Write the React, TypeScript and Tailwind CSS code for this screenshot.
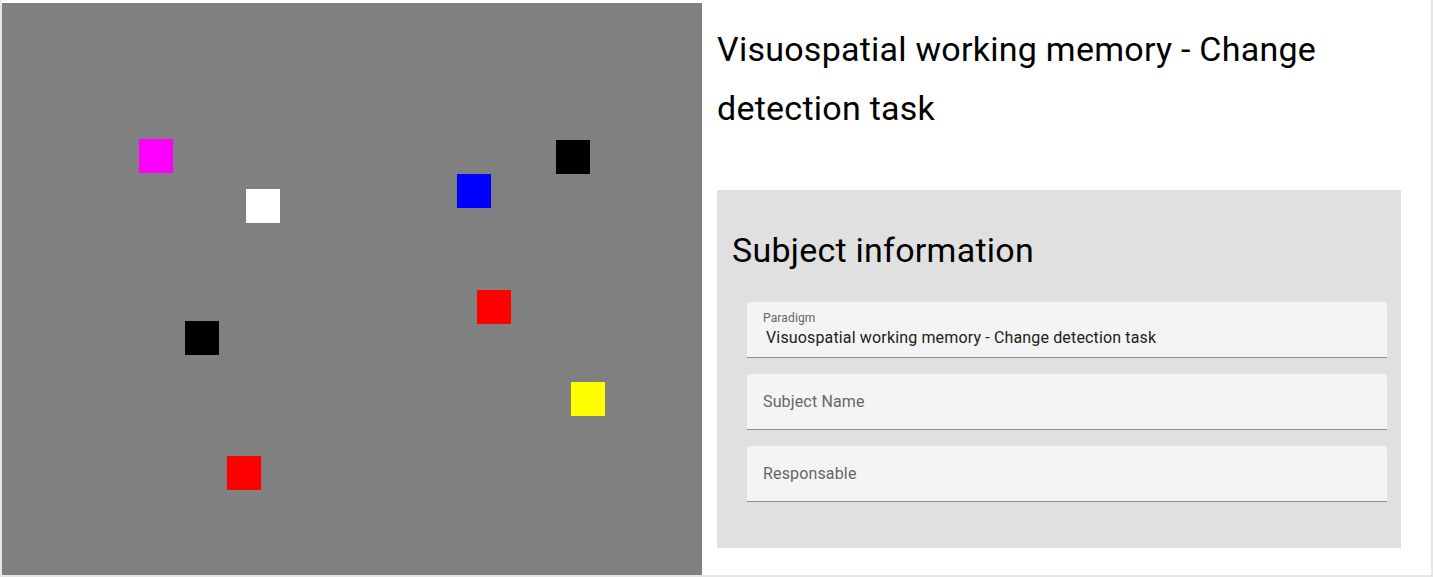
const squares = [
  { x: 137, y: 136, color: "bg-[#ff00ff]" },
  { x: 244, y: 186, color: "bg-white" },
  { x: 455, y: 171, color: "bg-[#0000ff]" },
  { x: 554, y: 137, color: "bg-black" },
  { x: 475, y: 287, color: "bg-[#ff0000]" },
  { x: 183, y: 318, color: "bg-black" },
  { x: 569, y: 379, color: "bg-[#ffff00]" },
  { x: 225, y: 453, color: "bg-[#ff0000]" },
];

function Field({ label, value }: { label: string; value?: string }) {
  return (
    <div className="h-[56px] w-[640px] rounded-t-[4px] border-b border-[#8d8d8d] bg-[#f4f4f4] px-4 tracking-[0.15px]">
      {value ? (
        <div className="flex flex-col pt-[8px]">
          <span className="text-[12px] leading-[16px] text-[#666666]">{label}</span>
          <span className="pl-[3px] text-[16px] leading-[24px] text-[#212121]">{value}</span>
        </div>
      ) : (
        <div className="flex h-full items-center text-[16px] text-[#666666]">{label}</div>
      )}
    </div>
  );
}

export default function App() {
  return (
    <div
      className="flex h-[577px] w-[1433px] border-x-2 border-b-2 border-[#e6e6e6] bg-white pt-[1px]"
      style={{ fontFamily: "Roboto, 'Liberation Sans', sans-serif" }}
    >
      {/* stimulus canvas */}
      <div className="relative h-[572px] w-[700px] mt-[2px] shrink-0 bg-[#808080]">
        {squares.map((s, i) => (
          <div
            key={i}
            className={`absolute h-[34px] w-[34px] ${s.color}`}
            style={{ left: s.x, top: s.y }}
          />
        ))}
      </div>

      <div className="flex flex-col pl-[15px] pt-[19px]">
        <h1 className="w-[684px] text-[34px] leading-[59px] tracking-[0.25px] text-black">
          Visuospatial working memory - Change detection task
        </h1>

        <div className="mt-[52px] flex h-[358px] w-[684px] flex-col bg-[#e0e0e0] pl-[15px] pt-[39px]">
          <h2 className="text-[34px] leading-[42px] tracking-[0.25px] text-black">Subject information</h2>
          <div className="mt-[31px] flex flex-col gap-4 pl-[15px]">
            <Field label="Paradigm" value="Visuospatial working memory - Change detection task" />
            <Field label="Subject Name" />
            <Field label="Responsable" />
          </div>
        </div>
      </div>
    </div>
  );
}
